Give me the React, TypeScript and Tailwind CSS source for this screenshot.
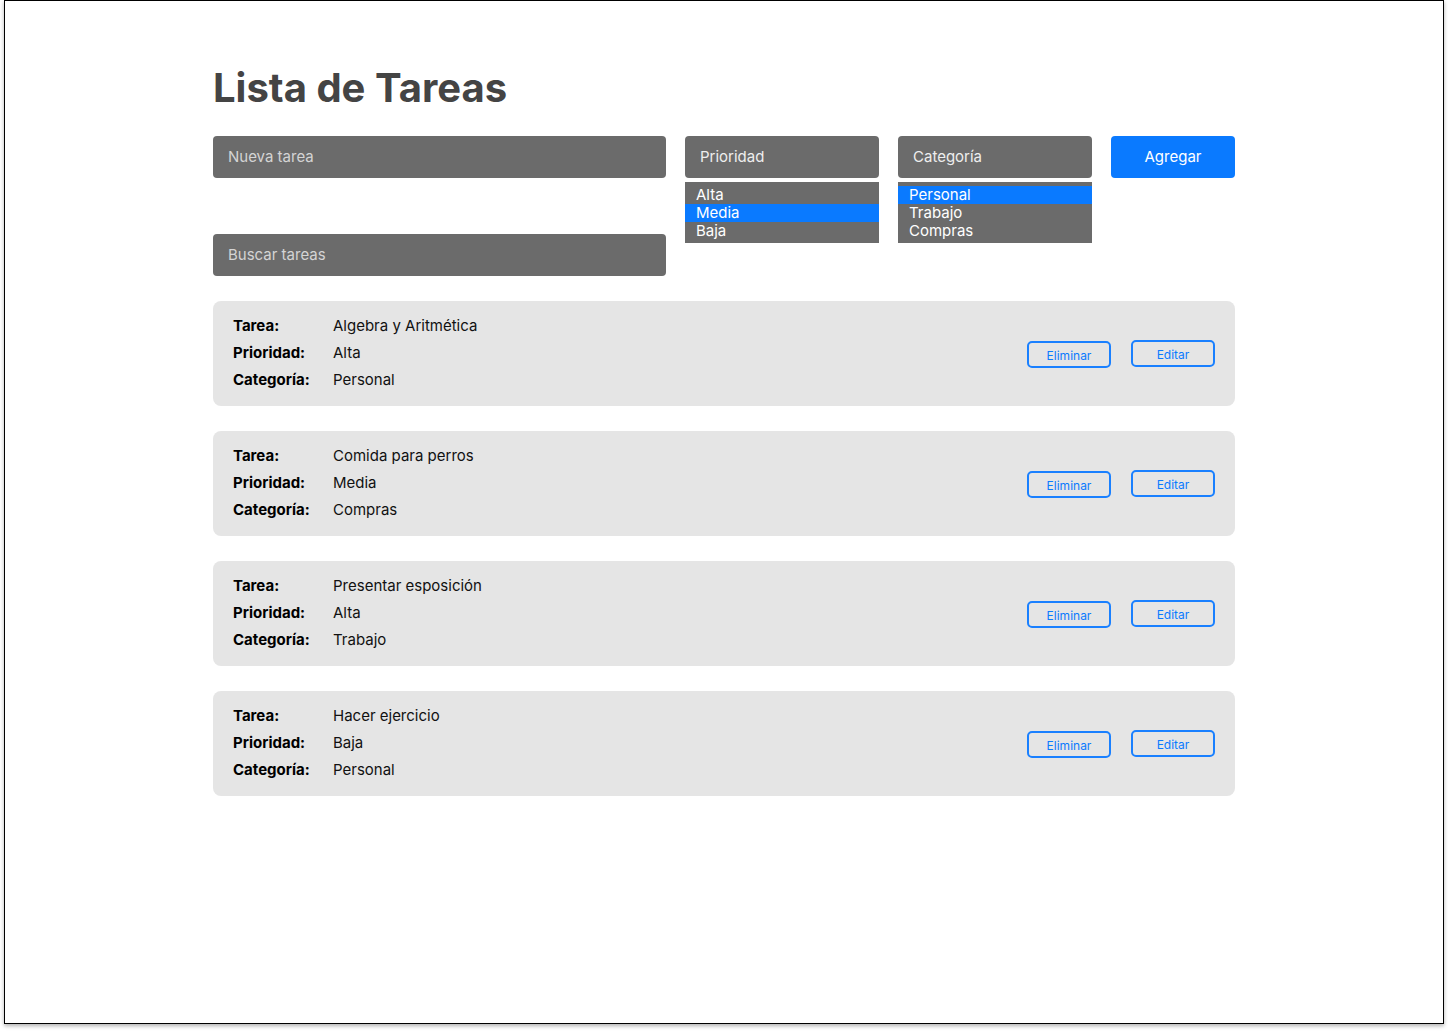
import React from "react";

const tasks = [
  { t: "Algebra y Aritmética", p: "Alta", c: "Personal" },
  { t: "Comida para perros", p: "Media", c: "Compras" },
  { t: "Presentar esposición", p: "Alta", c: "Trabajo" },
  { t: "Hacer ejercicio", p: "Baja", c: "Personal" },
];

function ListBox({ items, sel, top }: { items: string[]; sel: number; top: string }) {
  return (
    <div className={`mt-[4px] h-[61px] w-full bg-[#6b6b6b] ${top}`}>
      {items.map((it, i) => (
        <div
          key={it}
          className={`h-[18px] pl-[11px] text-[15px] leading-[18px] text-white ${i === sel ? "bg-[#0a7aff]" : ""}`}
        >
          {it}
        </div>
      ))}
    </div>
  );
}

export default function App() {
  return (
    <div className="min-h-[1032px] bg-white pl-[4px]" style={{ fontFamily: "Inter, 'Noto Sans', sans-serif" }}>
      <div className="h-[1024px] w-[1440px] border border-black bg-white px-[208px] pt-[63px] shadow-[0_2px_4px_rgba(0,0,0,0.3)]">
        <h1 className="text-[40px] font-bold leading-[48px] text-[#444444]">Lista de Tareas</h1>
        <div className="mt-[24px] flex items-start gap-[19px]">
          <div className="flex w-[453px] flex-col gap-[56px]">
            <div className="flex h-[42px] items-center rounded-[4px] bg-[#6b6b6b] pl-[15px] text-[15px] text-[#d4d4d4]">Nueva tarea</div>
            <div className="flex h-[42px] items-center rounded-[4px] bg-[#6b6b6b] pl-[15px] text-[15px] text-[#d4d4d4]">Buscar tareas</div>
          </div>
          <div className="flex w-[194px] flex-col">
            <div className="flex h-[42px] items-center rounded-[4px] bg-[#6b6b6b] pl-[15px] text-[15px] text-[#eeeeee]">Prioridad</div>
            <ListBox items={["Alta", "Media", "Baja"]} sel={1} top="pt-[4px]" />
          </div>
          <div className="flex w-[194px] flex-col">
            <div className="flex h-[42px] items-center rounded-[4px] bg-[#6b6b6b] pl-[15px] text-[15px] text-[#eeeeee]">Categoría</div>
            <ListBox items={["Personal", "Trabajo", "Compras"]} sel={0} top="pt-[4px]" />
          </div>
          <div className="flex h-[42px] w-[124px] items-center justify-center rounded-[4px] bg-[#0a7aff] text-[15px] text-white">Agregar</div>
        </div>
        <div className="mt-[25px] flex flex-col gap-[25px]">
          {tasks.map((task) => (
            <div key={task.t} className="flex h-[105px] items-center justify-between rounded-[8px] bg-[#e5e5e5] px-[20px]">
              <div className="-mt-[2px] grid grid-cols-[100px_auto] text-[15px] leading-[27px]">
                <div className="font-bold text-black">Tarea:</div>
                <div className="text-[#111111]">{task.t}</div>
                <div className="font-bold text-black">Prioridad:</div>
                <div className="text-[#111111]">{task.p}</div>
                <div className="font-bold text-black">Categoría:</div>
                <div className="text-[#111111]">{task.c}</div>
              </div>
              <div className="flex items-center gap-[20px]">
                <div className="mt-[2px] flex h-[27px] w-[84px] items-center justify-center rounded-[5px] border-2 border-[#1a80ff] pt-[3px] text-[12px] text-[#0a7aff]">Eliminar</div>
                <div className="flex h-[27px] w-[84px] items-center justify-center rounded-[5px] border-2 border-[#1a80ff] pt-[2px] text-[12px] text-[#0a7aff]">Editar</div>
              </div>
            </div>
          ))}
        </div>
      </div>
    </div>
  );
}
